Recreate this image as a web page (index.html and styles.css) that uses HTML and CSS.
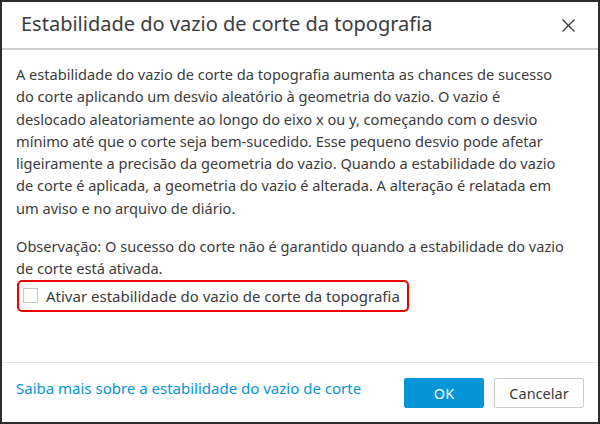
FILE: index.html
```html
<!DOCTYPE html>
<html lang="pt">
<head>
<meta charset="utf-8">
<link rel="stylesheet" href="styles.css">
</head>
<body>
<div class="dialog">
  <div class="header">
    <div class="title">Estabilidade do vazio de corte da topografia</div>
    <button class="close" aria-label="Fechar">
      <svg width="13" height="13" viewBox="0 0 13 13"><path d="M0.5 0.5 L12.5 12.5 M12.5 0.5 L0.5 12.5" stroke="#3c3c3c" stroke-width="1.3" fill="none"/></svg>
    </button>
  </div>
  <div class="content">
    <p class="text">A estabilidade do vazio de corte da topografia aumenta as chances de sucesso<br>do corte aplicando um desvio aleatório à geometria do vazio. O vazio é<br>deslocado aleatoriamente ao longo do eixo x ou y, começando com o desvio<br>mínimo até que o corte seja bem-sucedido. Esse pequeno desvio pode afetar<br>ligeiramente a precisão da geometria do vazio. Quando a estabilidade do vazio<br>de corte é aplicada, a geometria do vazio é alterada. A alteração é relatada em<br>um aviso e no arquivo de diário.</p>
    <p class="text note">Observação: O sucesso do corte não é garantido quando a estabilidade do vazio<br>de corte está ativada.</p>
    <label class="check-row">
      <span class="box"></span>
      <span class="label">Ativar estabilidade do vazio de corte da topografia</span>
    </label>
  </div>
  <div class="footer">
    <a class="link" href="#">Saiba mais sobre a estabilidade do vazio de corte</a>
    <div class="buttons">
      <button class="btn primary">OK</button>
      <button class="btn secondary">Cancelar</button>
    </div>
  </div>
</div>
</body>
</html>
```
FILE: styles.css
```css
html, body {
  margin: 0;
  padding: 0;
  background: #2b2b2b;
}
body {
  font-family: "Noto Sans", "Open Sans", sans-serif;
  color: #3c3c3c;
}
.dialog {
  box-sizing: border-box;
  width: 600px;
  height: 424px;
  border: 2px solid #2b2b2b;
  background: #ffffff;
  display: flex;
  flex-direction: column;
}
.header {
  height: 46px;
  border-bottom: 2px solid #cfcfcf;
  display: flex;
  align-items: center;
  justify-content: space-between;
  padding: 0 23px 0 19px;
}
.title {
  font-size: 20px;
  color: #3c3c3c;
  padding-bottom: 3px;
}
.close {
  background: none;
  border: 0;
  padding: 0;
  width: 13px;
  height: 13px;
  display: flex;
}
.content {
  flex: 1;
  padding: 13px 10px 0 14px;
  border-bottom: 1px solid #e5e5e5;
}
.text {
  margin: 0 0 16px 0;
  font-size: 14.6px;
  line-height: 22.3px;
  color: #3c3c3c;
  white-space: nowrap;
}
.text.note {
  margin-bottom: 0;
}
.check-row {
  display: flex;
  align-items: center;
  box-sizing: border-box;
  width: 392px;
  height: 32px;
  margin-left: 1px;
  border: 2px solid #ee0000;
  border-radius: 5px;
  padding-left: 4px;
}
.box {
  box-sizing: border-box;
  width: 15px;
  height: 15px;
  border: 1px solid #c8c8c8;
  background: #fff;
  margin-right: 8px;
}
.label {
  font-size: 15px;
  color: #3c3c3c;
  white-space: nowrap;
}
.footer {
  height: 59px;
  display: flex;
  align-items: center;
  justify-content: space-between;
  padding: 0 14px 0 14px;
}
.link {
  font-size: 15px;
  color: #0696d7;
  text-decoration: none;
  margin-bottom: 10px;
  white-space: nowrap;
}
.buttons {
  display: flex;
  gap: 10px;
}
.btn {
  font-family: "Noto Sans", "Open Sans", sans-serif;
  font-size: 14.5px;
  height: 30px;
  border-radius: 2px;
  padding: 0;
}
.primary {
  width: 80px;
  background: #0696d7;
  border: 1px solid #0696d7;
  color: #ffffff;
}
.secondary {
  width: 90px;
  background: #ffffff;
  border: 1px solid #cccccc;
  color: #3c3c3c;
}
```
